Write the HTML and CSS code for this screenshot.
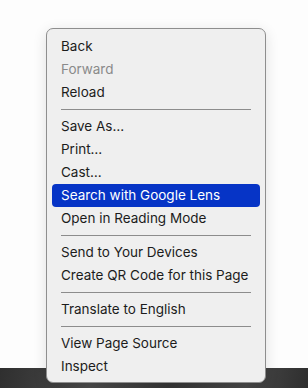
FILE: index.html
```html
<!doctype html>
<html>
    <head>
        <meta charset="utf-8" />
        <title>Context menu</title>
        <link rel="stylesheet" href="styles.css">
    </head>
    <body>
        <div id="page">
            <div class="content"></div>
            <div class="desktop"></div>
        </div>
        <ul class="menu">
            <li>Back</li>
            <li class="off">Forward</li>
            <li>Reload</li>
            <li class="sep"></li>
            <li>Save As…</li>
            <li>Print…</li>
            <li>Cast…</li>
            <li class="hot">Search with Google Lens</li>
            <li>Open in Reading Mode</li>
            <li class="sep"></li>
            <li>Send to Your Devices</li>
            <li>Create QR Code for this Page</li>
            <li class="sep"></li>
            <li>Translate to English</li>
            <li class="sep"></li>
            <li>View Page Source</li>
            <li>Inspect</li>
        </ul>
    </body>
</html>
```

FILE: styles.css
```css
html, body {
    margin: 0px;
    padding: 0px;
    height: 100%;
}

body {
    font-family: Inter, "Liberation Sans", sans-serif;
    background-color: #fdfdfd;
}

#page {
    height: 100%;
    display: grid;
    grid-template-rows: 1fr 20px;
}

.desktop {
    background-color: #3c3c3c;
    background-image: linear-gradient(100deg, #2f2f2f 0%, #4a4a4a 30%, #353535 55%, #474747 80%, #2e2e2e 100%);
}

.menu {
    position: absolute;
    top: 28px;
    left: 46px;
    width: 208px;
    margin: 0px;
    padding: 6px 5px 4px 5px;
    list-style: none;
    background-color: #efefef;
    border: 1px solid #8e8e8e;
    border-radius: 7px;
    box-shadow: 0 3px 14px rgba(0, 0, 0, 0.12);
}

.menu li {
    height: 23px;
    line-height: 23px;
    padding: 0 9px;
    font-size: 13.5px;
    color: #1c1c1c;
    border-radius: 4px;
    white-space: nowrap;
}

.menu li.off {
    color: #8a8a8a;
}

.menu li.hot {
    background-color: #0634c6;
    color: #ffffff;
}

.menu li.sep {
    height: 11px;
    padding: 0;
    display: flex;
    align-items: center;
    margin: 0 9px;
}

.menu li.sep::before {
    content: "";
    flex: 1;
    height: 1px;
    background-color: #8c8c8c;
}
```
